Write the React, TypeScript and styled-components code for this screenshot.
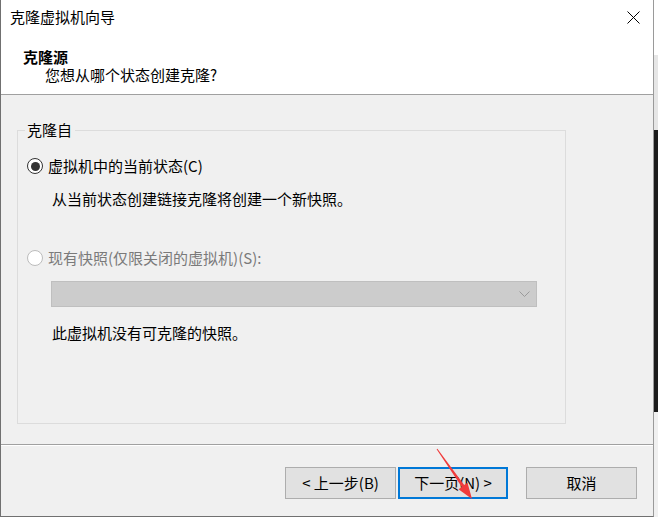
import styled, { createGlobalStyle } from 'styled-components'

const GlobalStyle = createGlobalStyle`
  html, body {
    margin: 0;
    padding: 0;
    background: #ffffff;
  }
  body {
    font-family: "Noto Sans CJK SC", "Noto Sans", sans-serif;
    font-size: 15px;
    color: #000;
  }
`

const Screen = styled.div`
  position: relative;
  width: 658px;
  height: 519px;
  display: flex;
  flex-direction: column;
  overflow: hidden;
`

const Row = styled.div`
  display: flex;
  height: 517px;
`

const Window = styled.div`
  width: 654px;
  height: 517px;
  box-sizing: border-box;
  display: flex;
  flex-direction: column;
  background: #ffffff;
  border-left: 1px solid #707070;
  border-right: 1px solid #9a9a9a;
  border-bottom: 1px solid #707070;
`

// whatever lies behind the dialog on the right edge
const Behind = styled.div`
  flex: 1;
  background: linear-gradient(
    to bottom,
    #ffffff 0 55px,
    #e6e6e6 55px 130px,
    #1b1b1b 130px 412px,
    #f0f0f0 412px 100%
  );
`

const BottomStrip = styled.div`
  height: 2px;
  background: #ffffff;
`

const TitleBar = styled.div`
  height: 34px;
  display: flex;
  align-items: center;
  justify-content: space-between;
  padding: 0 13px 0 9px;
`

const TitleText = styled.span`
  font-size: 15px;
  line-height: 20px;
`

const CloseIcon = styled.svg`
  width: 13px;
  height: 13px;
  display: block;
`

const Header = styled.div`
  height: 61px;
  box-sizing: border-box;
  padding: 14px 0 0 22px;
  border-bottom: 1px solid #a0a0a0;
`

const HeaderTitle = styled.div`
  font-weight: 700;
  line-height: 18px;
`

const HeaderSub = styled.div`
  line-height: 18px;
  padding-left: 22px;
`

const Body = styled.div`
  flex: 1;
  background: #f0f0f0;
  padding: 25px 0 0 16px;
`

const Group = styled.fieldset`
  margin: 0;
  width: 549px;
  height: 304px;
  box-sizing: border-box;
  border: 1px solid #dcdcdc;
  padding: 0 0 0 9px;
  display: flex;
  flex-direction: column;
  align-items: flex-start;
`

const GroupLabel = styled.legend`
  padding: 0 3px 0 2px;
  margin-left: -2px;
  line-height: 20px;
`

const RadioRow = styled.label<{ $top: number; $disabled?: boolean }>`
  display: flex;
  align-items: center;
  gap: 5px;
  margin-top: ${(p) => p.$top}px;
  line-height: 20px;
  color: ${(p) => (p.$disabled ? '#7a7a7a' : '#000')};
`

const RadioCircle = styled.span<{ $checked?: boolean; $disabled?: boolean }>`
  width: 16px;
  height: 16px;
  box-sizing: border-box;
  border-radius: 50%;
  border: 1px solid ${(p) => (p.$disabled ? '#bcbcbc' : '#333333')};
  background: #ffffff;
  display: flex;
  align-items: center;
  justify-content: center;

  &::after {
    content: '';
    width: 9px;
    height: 9px;
    border-radius: 50%;
    background: #333333;
    display: ${(p) => (p.$checked ? 'block' : 'none')};
  }
`

const Note = styled.div<{ $top: number }>`
  margin-top: ${(p) => p.$top}px;
  margin-left: 25px;
  line-height: 20px;
`

const Select = styled.div`
  margin-top: 13px;
  margin-left: 24px;
  width: 486px;
  height: 26px;
  box-sizing: border-box;
  background: #cccccc;
  border: 1px solid #bfbfbf;
  display: flex;
  align-items: center;
  justify-content: flex-end;
  padding-right: 6px;
`

const Chevron = styled.svg`
  width: 11px;
  height: 7px;
  display: block;
`

const Footer = styled.div`
  height: 72px;
  box-sizing: border-box;
  background: #f0f0f0;
  border-top: 1px solid #a0a0a0;
  box-shadow: inset 0 1px 0 #ffffff;
  display: flex;
  justify-content: flex-end;
  align-items: flex-start;
  gap: 2px;
  padding: 22px 16px 0 0;
`

const Button = styled.button<{ $primary?: boolean }>`
  width: ${(p) => (p.$primary ? 110 : 111)}px;
  height: 32px;
  box-sizing: border-box;
  background: #e1e1e1;
  border: ${(p) => (p.$primary ? '2px solid #0078d7' : '1px solid #adadad')};
  font-family: inherit;
  font-size: 15px;
  line-height: 20px;
  color: #000;
  padding: 0;
`

const CancelButton = styled(Button)`
  margin-left: 16px;
`

const Arrow = styled.svg`
  position: absolute;
  left: 430px;
  top: 444px;
  width: 50px;
  height: 60px;
  pointer-events: none;
`

export default function App() {
  return (
    <Screen>
      <GlobalStyle />
      <Row>
        <Window>
          <TitleBar>
            <TitleText>克隆虚拟机向导</TitleText>
            <CloseIcon viewBox="0 0 13 13">
              <path d="M0.5 0.5 L12.5 12.5 M12.5 0.5 L0.5 12.5" stroke="#000" strokeWidth="1" fill="none" />
            </CloseIcon>
          </TitleBar>
          <Header>
            <HeaderTitle>克隆源</HeaderTitle>
            <HeaderSub>您想从哪个状态创建克隆?</HeaderSub>
          </Header>
          <Body>
            <Group>
              <GroupLabel>克隆自</GroupLabel>
              <RadioRow $top={16}>
                <RadioCircle $checked />
                虚拟机中的当前状态(C)
              </RadioRow>
              <Note $top={13}>从当前状态创建链接克隆将创建一个新快照。</Note>
              <RadioRow $top={39} $disabled>
                <RadioCircle $disabled />
                现有快照(仅限关闭的虚拟机)(S):
              </RadioRow>
              <Select>
                <Chevron viewBox="0 0 11 7">
                  <path d="M0.5 0.5 L5.5 5.5 L10.5 0.5" stroke="#9a9a9a" strokeWidth="1" fill="none" />
                </Chevron>
              </Select>
              <Note $top={16}>此虚拟机没有可克隆的快照。</Note>
            </Group>
          </Body>
          <Footer>
            <Button>&lt; 上一步(B)</Button>
            <Button $primary>下一页(N) &gt;</Button>
            <CancelButton>取消</CancelButton>
          </Footer>
        </Window>
        <Behind />
      </Row>
      <BottomStrip />
      <Arrow viewBox="0 0 50 60">
        <polygon
          points="7.4,4.7 34.2,41.1 37.5,38.8 42,55 28.5,45.2 31.8,42.9 6.6,5.3"
          fill="#f03c3c"
        />
      </Arrow>
    </Screen>
  )
}
